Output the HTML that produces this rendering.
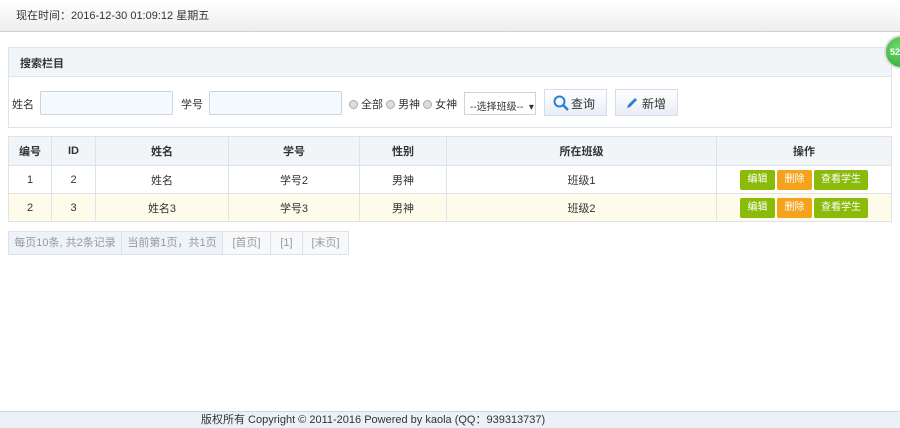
<!DOCTYPE html>
<html><head><meta charset="utf-8"><style>
*{margin:0;padding:0;box-sizing:border-box}
body{width:900px;height:428px;position:relative;overflow:hidden;background:#fff;font-family:"Liberation Sans","Noto Sans CJK SC",sans-serif;font-size:11px;color:#333}
.a{position:absolute}
.hdr{left:0;top:0;width:900px;height:32px;background:linear-gradient(#fff,#eee);border-bottom:1px solid #d0d0d0}
.panel{left:8px;top:47px;width:884px;height:81px;border:1px solid #dde3e8}
.ph{left:0;top:0;width:882px;height:29px;background:#f2f5f7;border-bottom:1px solid #dde3e8;font-weight:bold;padding:7px 0 0 11px}
.inp{height:24px;border:1px solid #c8d4e0;background:#f5faff;border-radius:2px}
.btn{height:27px;border:1px solid #d6dcf0;background:linear-gradient(#fff,#e9eef5);font-size:12px;padding:5px 0 0 0}
.rd{display:inline-block;width:9px;height:9px;border-radius:50%;border:1px solid #aaa;background:#ddd;vertical-align:-1px;margin-right:3px}
table{position:absolute;left:8px;top:136px;width:884px;border-collapse:collapse}
td,th{border:1px solid #dde3e8;text-align:center;font-size:11px}
th{height:29px;background:#f2f5f7}
td{height:28px}
tr.y td{background:#fffbeb}
.b{display:inline-block;color:#fff;height:20px;line-height:20px;font-size:10px;border-radius:2px;margin:0 1px;vertical-align:middle}
.g{background:#8aba0a}.o{background:#f4a31a}
.pg{top:231px;height:24px;border:1px solid #dde3e8;background:#edf3f8;color:#999;text-align:center;line-height:22px}
.ft{left:0;top:411px;width:900px;height:17px;background:#eaf2f8;border-top:1px solid #cdd8e2;font-size:11px;padding-left:201px;line-height:16px}
</style></head><body>
<div class="a hdr"><span class="a" style="left:16px;top:7px">现在时间：2016-12-30 01:09:12 星期五</span></div>
<div class="a panel">
<div class="a ph">搜索栏目</div>
<span class="a" style="left:3px;top:48px">姓名</span>
<div class="a inp" style="left:31px;top:43px;width:133px"></div>
<span class="a" style="left:172px;top:48px">学号</span>
<div class="a inp" style="left:200px;top:43px;width:133px"></div>
<span class="a" style="left:340px;top:48px"><span class="rd"></span>全部 <span class="rd"></span>男神 <span class="rd"></span>女神</span>
<div class="a" style="left:455px;top:44px;width:72px;height:23px;border:1px solid #c8d4e0;font-size:10px;padding:5px 0 0 5px">--选择班级-- &nbsp;▾</div>
<div class="a btn" style="left:535px;top:41px;width:63px"><svg class="a" style="left:8px;top:5px" width="16" height="16"><circle cx="6.5" cy="6.5" r="5" fill="none" stroke="#2a7fd4" stroke-width="2"/><path d="M10 10l5 5" stroke="#2a7fd4" stroke-width="2.5"/></svg><span style="margin-left:26px">查询</span></div>
<div class="a btn" style="left:606px;top:41px;width:63px"><svg class="a" style="left:9px;top:6px" width="14" height="14"><path d="M2 12l1-3 7-7 2 2-7 7z" fill="#2a7fd4"/></svg><span style="margin-left:26px">新增</span></div>
</div>
<div class="a" style="left:884px;top:35px;width:34px;height:34px;border-radius:50%;background:radial-gradient(circle at 40% 35%,#6dd86d,#2aa52a);border:2px solid #ddd;color:#fff;font-size:9px;font-weight:bold;padding:10px 0 0 4px">52</div>
<table>
<tr><th style="width:43px">编号</th><th style="width:44px">ID</th><th style="width:133px">姓名</th><th style="width:131px">学号</th><th style="width:87px">性别</th><th style="width:270px">所在班级</th><th>操作</th></tr>
<tr><td>1</td><td>2</td><td>姓名</td><td>学号2</td><td>男神</td><td>班级1</td><td><span class="b g" style="width:35px">编辑</span><span class="b o" style="width:35px">删除</span><span class="b g" style="width:54px">查看学生</span></td></tr>
<tr class="y"><td>2</td><td>3</td><td>姓名3</td><td>学号3</td><td>男神</td><td>班级2</td><td><span class="b g" style="width:35px">编辑</span><span class="b o" style="width:35px">删除</span><span class="b g" style="width:54px">查看学生</span></td></tr>
</table>
<div class="a pg" style="left:8px;width:114px">每页10条, 共2条记录</div>
<div class="a pg" style="left:121px;width:102px">当前第1页，共1页</div>
<div class="a pg" style="left:222px;width:49px;background:#f6f8fa">[首页]</div>
<div class="a pg" style="left:270px;width:33px;background:#f6f8fa">[1]</div>
<div class="a pg" style="left:302px;width:47px;background:#f6f8fa">[末页]</div>
<div class="a ft">版权所有 Copyright © 2011-2016 Powered by kaola (QQ：939313737)</div>
</body></html>
